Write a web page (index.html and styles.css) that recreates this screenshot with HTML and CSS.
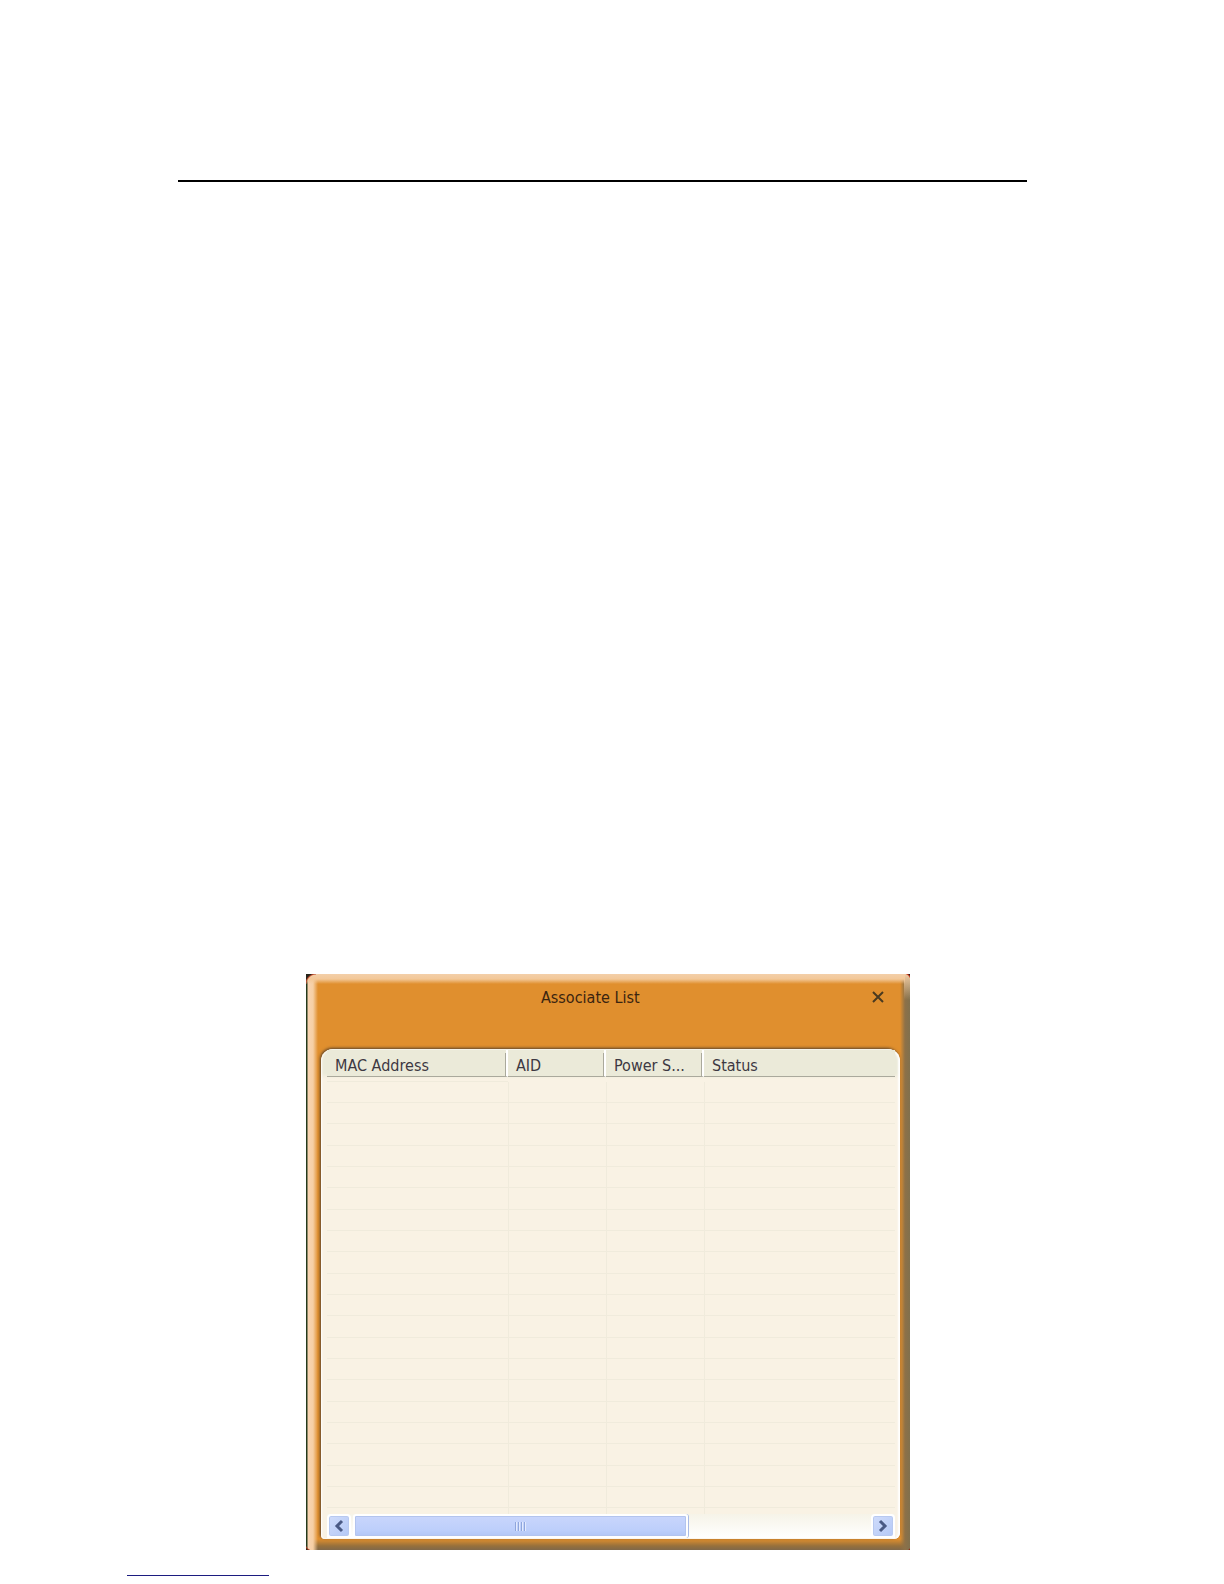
FILE: index.html
```html
<!DOCTYPE html>
<html lang="en">
<head>
  <meta charset="UTF-8">
  <title>Associate List</title>
  <link rel="stylesheet" href="styles.css">
</head>
<body>
  <hr class="page-rule">

  <main class="window">
    <header class="title-bar">
      <h1>Associate List</h1>
      <button class="close" type="button" aria-label="Close">
        <svg width="12" height="12" viewBox="0 0 12 12"><path d="M1 1l10 10M11 1L1 11" stroke="#4a3a20" stroke-width="2" fill="none"/></svg>
      </button>
    </header>

    <section class="panel">
      <table>
        <colgroup>
          <col class="col-mac">
          <col class="col-small">
          <col class="col-small">
          <col>
        </colgroup>
        <thead>
          <tr>
            <th>MAC Address</th>
            <th>AID</th>
            <th>Power S...</th>
            <th>Status</th>
          </tr>
        </thead>
        <tbody id="associate-rows">
          <!-- empty rows are added below -->
        </tbody>
      </table>

      <div class="scrollbar">
        <button class="arrow" type="button" aria-label="Scroll left">
          <svg width="12" height="14" viewBox="0 0 12 14"><path d="M9 2L4 7l5 5" stroke="#4a5a85" stroke-width="3" fill="none"/></svg>
        </button>
        <div class="track">
          <div class="thumb"><span class="grip"></span></div>
        </div>
        <button class="arrow" type="button" aria-label="Scroll right">
          <svg width="12" height="14" viewBox="0 0 12 14"><path d="M3 2l5 5-5 5" stroke="#4a5a85" stroke-width="3" fill="none"/></svg>
        </button>
      </div>
    </section>
  </main>

  <footer>
    <a class="footer-link" href="#" aria-label="Home"></a>
  </footer>

  <script>
    const tbody = document.getElementById("associate-rows");
    for (let i = 0; i < 21; i++) {
      const row = document.createElement("tr");
      row.innerHTML = "<td></td><td></td><td></td><td></td>";
      tbody.appendChild(row);
    }
  </script>
</body>
</html>
```

FILE: styles.css
```css
* {
  box-sizing: border-box;
}

body {
  margin: 0;
  background-color: #fff;
  font-family: "DejaVu Sans Condensed", "Noto Sans", sans-serif;
  font-size: 16px;
  color: #3d3842;
}

.page-rule {
  margin: 180px 197px 792px 178px;
  border: 0;
  border-top: 2px solid #000;
}

/* window frame: dark corners first, then the bevelled edges */
.window {
  width: 604px;
  margin-left: 306px;
  padding: 0 10px 11px 15px;
  background:
    radial-gradient(circle at 100% 100%, transparent 9px, #b8452a 10px, #26241a 11px) no-repeat 0 0 / 10px 10px,
    radial-gradient(circle at 0 100%, transparent 7px, #d03a20 8px, #26241a 9px) no-repeat 100% 0 / 7px 7px,
    radial-gradient(circle at 100% 0, transparent 7px, #a83a20 8px, #26241a 9px) no-repeat 0 100% / 7px 7px,
    radial-gradient(circle at 0 0, transparent 4px, #8a2a18 5px) no-repeat 100% 100% / 4px 4px,
    linear-gradient(to bottom, #f3cfa9 0, #f3c898 5px, rgba(224, 143, 46, 0) 10px) no-repeat 0 0 / 599px 10px,
    linear-gradient(to right, #243a1c 0, #243a1c 1px, #f8d4b2 2px, #f6cfa5 7px, rgba(224, 143, 46, 0) 12px) no-repeat 0 0 / 12px 100%,
    linear-gradient(to bottom, #f0cda5 0, rgba(240, 205, 165, 0) 26px) no-repeat 100% 0 / 6px 26px,
    linear-gradient(to left, #80704e 0, #8d7148 5px, rgba(224, 143, 46, 0) 10px) no-repeat 100% 0 / 10px 100%,
    linear-gradient(to top, #80684a 0, #96703c 4px, rgba(224, 143, 46, 0) 11px) no-repeat 0 100% / 100% 11px,
    #e08f2e;
}

.title-bar {
  display: grid;
  grid-template-columns: 220px 1fr auto;
  align-items: center;
  height: 75px;
  padding: 0 16px 29px 0;
}

.title-bar h1 {
  grid-column: 2;
  margin: 0;
  font-size: 16px;
  font-weight: normal;
  color: #3a2410;
}

.close {
  display: flex;
  padding: 0;
  border: 0;
  background: none;
}

/* list */
.panel {
  padding: 1px 5px 1px 6px;
  border-radius: 12px 12px 6px 4px;
  background: linear-gradient(to bottom, #ebead9 0, #ebead9 24px, #f9f2e4 30px);
  box-shadow: -1px -1px 3px #57412c, inset 1px 0 2px #fff, inset -2px 0 2px #fff;
}

table {
  width: 100%;
  table-layout: fixed;
  border-collapse: separate;
  border-spacing: 0;
}

.col-mac {
  width: 181px;
}

.col-small {
  width: 98px;
}

th {
  height: 27px;
  padding: 6px 0 0 8px;
  border-right: 2px solid #fff;
  border-bottom: 1px solid #aaa99c;
  background: linear-gradient(#aaa99c, #aaa99c) no-repeat 100% 3px / 1px 100% #ebead9;
  font-weight: normal;
  line-height: 20px;
  text-align: left;
  white-space: nowrap;
}

th:last-child {
  border-right: 0;
  background: #ebead9;
}

tbody::before {
  content: "";
  display: block;
  height: 4px;
  border-bottom: 1px solid #f0ebdc;
}

td {
  height: 21px;
  padding: 0;
  border-bottom: 1px solid #f0ebdc;
  background-color: #f9f2e4;
}

td + td {
  border-left: 1px solid #f0ebdc;
}

tr:nth-child(3n) td {
  height: 22px;
}

tbody tr:last-child td {
  height: 6px;
  border-bottom: 0;
}

/* horizontal scrollbar */
.scrollbar {
  display: flex;
  gap: 2px;
  height: 24px;
  background: linear-gradient(#f6f3e8, #fff);
}

.arrow {
  display: flex;
  align-items: center;
  justify-content: center;
  width: 24px;
  padding: 0;
  border: 2px solid #fff;
  border-radius: 4px;
  background: linear-gradient(135deg, #d0dcfb, #b4c8f6);
  box-shadow: inset 0 0 0 1px #b8c9f0;
}

.track {
  flex: 1;
}

.thumb {
  display: flex;
  align-items: center;
  justify-content: center;
  width: 65%;
  height: 24px;
  border: 2px solid #fff;
  border-radius: 3px;
  background: linear-gradient(#c9d6fc, #bdcffb 70%, #b3c6f5);
  box-shadow: inset 0 0 0 1px #b3c4ee, 1px 0 0 #a9bbe6;
}

.grip {
  width: 11px;
  height: 9px;
  background: repeating-linear-gradient(to right, #8fa6dc 0, #8fa6dc 1px, #e3eafd 1px, #e3eafd 2px, transparent 2px, transparent 3px);
}

footer {
  padding: 25px 0 7px 127px;
}

.footer-link {
  display: block;
  width: 142px;
  border-bottom: 1px solid #1c1c80;
}
```
